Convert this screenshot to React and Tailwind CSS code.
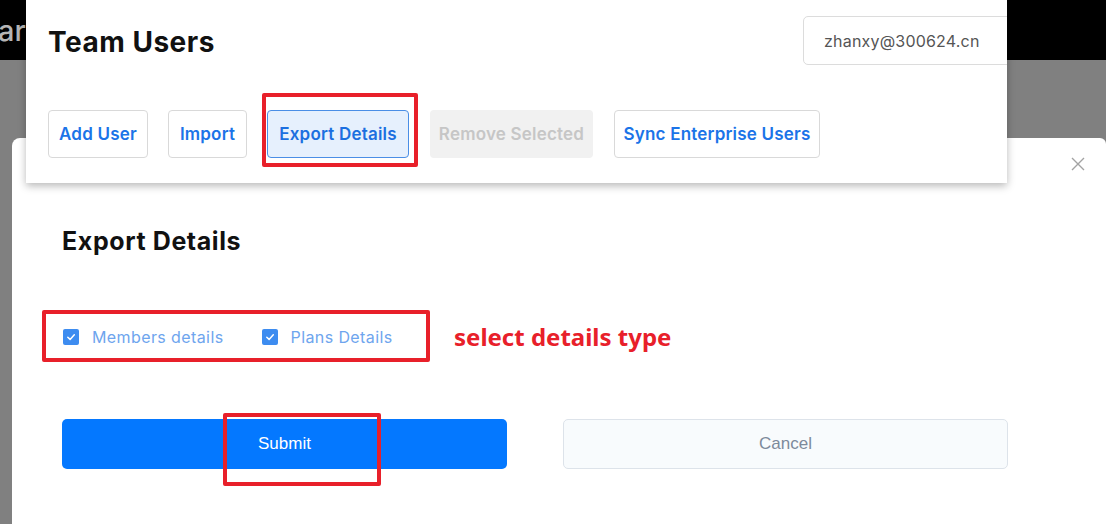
import React from "react";

function Check() {
  return (
    <span className="w-[16px] h-[16px] rounded-[2px] bg-[#3d8cf0] flex items-center justify-center shrink-0">
      <svg width="10" height="10" viewBox="0 0 10 10" fill="none">
        <path d="M1.8 5.2 L4.1 7.4 L8.3 2.8" stroke="white" strokeWidth="1.5" strokeLinecap="round" strokeLinejoin="round" />
      </svg>
    </span>
  );
}

export default function App() {
  return (
    <div className="relative w-[1106px] h-[524px] overflow-hidden bg-[#808080] font-['Inter',sans-serif]">
      {/* background header band */}
      <div className="h-[60px] bg-black flex items-center overflow-hidden">
        <span className="ml-[-2px] text-[#b5b5b5] text-[29px] font-medium leading-none">ar</span>
      </div>

      {/* modal */}
      <div className="pl-[12px] pt-[78px]">
        <div className="relative bg-white rounded-tl-[8px] rounded-tr-[6px] h-[386px] pl-[50px] pt-[88px]">
          <div className="absolute top-[19px] right-[21px]">
            <svg width="14" height="14" viewBox="0 0 14 14" fill="none">
              <path d="M1 1 L13 13 M13 1 L1 13" stroke="#a3a3a3" strokeWidth="1.4" />
            </svg>
          </div>
          <h2 className="text-[25px] leading-[30px] font-bold tracking-[0.6px] text-[#111]">Export Details</h2>
          <div className="mt-[69px] h-[24px] flex items-center gap-[13px] ml-[1px]">
            <div className="flex items-center gap-[13px]">
              <Check />
              <span className="text-[16px] tracking-[0.4px] text-[#6ea5ee]">Members details</span>
            </div>
            <div className="flex items-center gap-[13px] ml-[25px]">
              <Check />
              <span className="text-[16px] tracking-[0.4px] text-[#6ea5ee]">Plans Details</span>
            </div>
          </div>
          <div className="mt-[70px] flex gap-[56px]">
            <button className="w-[445px] h-[50px] rounded-[5px] bg-[#0478ff] text-white text-[17px] font-['Liberation_Sans',sans-serif]">
              Submit
            </button>
            <button className="w-[445px] h-[50px] rounded-[5px] bg-[#f8fbfd] border border-[#dde3ea] text-[#7d8a9b] text-[17px] font-['Liberation_Sans',sans-serif]">
              Cancel
            </button>
          </div>
        </div>
      </div>

      {/* Team Users card overlay */}
      <div className="absolute left-[26px] top-0 w-[981px] h-[183px] bg-white overflow-hidden shadow-[0_3px_8px_rgba(0,0,0,0.28)]">
        <div className="flex items-start">
          <h1 className="ml-[22px] mt-[25px] text-[28px] leading-[34px] font-bold tracking-[0.5px] text-[#111]">Team Users</h1>
          <div className="ml-auto mr-[-30px] mt-[16px] w-[234px] h-[49px] border border-[#dcdcdc] rounded-[5px] flex items-center pl-[20px] text-[16px] tracking-[0.2px] text-[#555]">
            zhanxy@300624.cn
          </div>
        </div>
        <div className="mt-[45px] ml-[22px] flex gap-[20px]">
          <button className="w-[100px] h-[48px] pt-[2px] rounded-[4px] border border-[#d9d9d9] text-[#1b74e8] text-[17px] tracking-[0.2px] font-semibold">Add User</button>
          <button className="w-[79px] h-[48px] pt-[2px] rounded-[4px] border border-[#d9d9d9] text-[#1b74e8] text-[17px] tracking-[0.2px] font-semibold">Import</button>
          <button className="w-[142px] h-[48px] pt-[2px] rounded-[4px] border border-[#4a8ee6] bg-[#e6f0fd] text-[#1b6fe0] text-[17px] tracking-[0.2px] font-semibold">Export Details</button>
          <button className="w-[163px] h-[48px] pt-[2px] rounded-[4px] bg-[#f1f1f1] text-[#c6c6c6] text-[17px] tracking-[0.2px] font-semibold ml-[1px]">Remove Selected</button>
          <button className="w-[206px] h-[48px] pt-[2px] rounded-[4px] border border-[#d9d9d9] text-[#1b74e8] text-[17px] tracking-[0.2px] font-semibold ml-[1px]">Sync Enterprise Users</button>
        </div>
      </div>

      {/* annotations */}
      <div className="absolute left-[262px] top-[93px] w-[156px] h-[74px] border-[4px] border-[#e8202a] rounded-[2px]" />
      <div className="absolute left-[42px] top-[310px] w-[388px] h-[52px] border-[4px] border-[#e8202a] rounded-[2px]" />
      <div className="absolute left-[223px] top-[413px] w-[158px] h-[73px] border-[4px] border-[#e8202a] rounded-[2px]" />
      <div className="absolute left-[454px] top-[320px] text-[24px] leading-[34px] font-bold text-[#e8202a] font-['Noto_Sans',sans-serif]">
        select details type
      </div>
    </div>
  );
}
